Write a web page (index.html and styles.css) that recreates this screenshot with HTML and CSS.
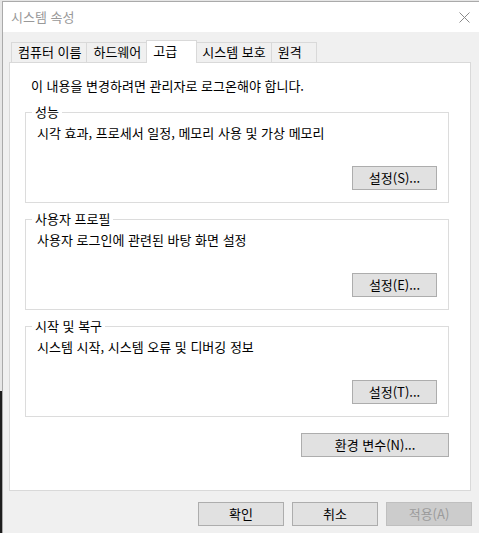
FILE: index.html
```html
<!DOCTYPE html>
<html lang="ko">
<head>
<meta charset="utf-8">
<title>시스템 속성</title>
<link rel="stylesheet" href="styles.css">
</head>
<body>
<div class="window">
  <div class="titlebar">
    <span class="title">시스템 속성</span>
    <svg class="close" viewBox="0 0 11 11" aria-hidden="true"><path d="M0.5 0.5 L10.5 10.5 M10.5 0.5 L0.5 10.5"/></svg>
  </div>
  <div class="body">
    <div class="tabs">
      <div class="tab">컴퓨터 이름</div>
      <div class="tab">하드웨어</div>
      <div class="tab active">고급</div>
      <div class="tab">시스템 보호</div>
      <div class="tab last">원격</div>
    </div>
    <div class="panel">
      <p class="notice">이 내용을 변경하려면 관리자로 로그온해야 합니다.</p>
      <div class="group">
        <span class="group-title">성능</span>
        <p class="group-desc">시각 효과, 프로세서 일정, 메모리 사용 및 가상 메모리</p>
        <button class="btn btn-set">설정(S)...</button>
      </div>
      <div class="group">
        <span class="group-title">사용자 프로필</span>
        <p class="group-desc">사용자 로그인에 관련된 바탕 화면 설정</p>
        <button class="btn btn-set">설정(E)...</button>
      </div>
      <div class="group">
        <span class="group-title">시작 및 복구</span>
        <p class="group-desc">시스템 시작, 시스템 오류 및 디버깅 정보</p>
        <button class="btn btn-set">설정(T)...</button>
      </div>
      <div class="env-row">
        <button class="btn btn-wide">환경 변수(N)...</button>
      </div>
    </div>
    <div class="footer">
      <button class="btn btn-dialog">확인</button>
      <button class="btn btn-dialog">취소</button>
      <button class="btn btn-dialog" disabled>적용(A)</button>
    </div>
  </div>
</div>
</body>
</html>
```
FILE: styles.css
```css
* { box-sizing: border-box; }
html, body { margin: 0; height: 100%; }
body {
  background: linear-gradient(to bottom, #e6e6e6 0, #e6e6e6 391px, #1e1e1e 391px);
  font-family: "Noto Sans CJK KR", "Noto Sans", sans-serif;
  font-size: 13px;
  line-height: 16px;
  color: #000;
  overflow: hidden;
}
.window {
  margin: 1px 0 0 2px;
  height: calc(100% - 1px);
  border-top: 1px solid #aaaaaa;
  border-left: 1px solid #aaaaaa;
  background: #f0f0f0;
}
.titlebar {
  height: 30px;
  background: #fff;
  display: flex;
  align-items: center;
  justify-content: space-between;
  padding: 0 9px 0 8px;
}
.title { color: #999999; }
.close { width: 11px; height: 11px; stroke: #8a8a8a; stroke-width: 1; fill: none; }
.body { padding: 8px 0 0 6px; }
.tabs {
  display: flex;
  align-items: flex-end;
  height: 22px;
  margin-left: 2px;
}
.tab {
  height: 20px;
  min-width: 46px;
  padding: 0 5px 0 6px;
  border: 1px solid #d9d9d9;
  border-right: none;
  border-bottom: none;
  background: #f0f0f0;
  line-height: 18px;
  white-space: nowrap;
}
.tab.last { border-right: 1px solid #d9d9d9; }
.tab.active {
  position: relative;
  z-index: 1;
  height: 23px;
  min-width: 51px;
  margin-bottom: -1px;
  background: #fff;
  border-right: 1px solid #d9d9d9;
  line-height: 20px;
}
.tab.active + .tab { border-left: none; padding-left: 5px; }
.panel {
  width: 462px;
  background: #fff;
  border: 1px solid #d9d9d9;
  padding: 15px 21px 33px 15px;
}
.notice { margin: 0 0 18px 6px; }
.group {
  position: relative;
  display: flex;
  flex-direction: column;
  border: 1px solid #dcdcdc;
  padding: 12px 11px 12px 11px;
}
.group + .group { margin-top: 16px; }
.group-title {
  position: absolute;
  top: -9px;
  left: 6px;
  padding: 0 3px;
  background: #fff;
}
.group-desc { margin: 0 0 25px; }
.btn {
  font: inherit;
  height: 24px;
  padding: 0;
  border: 1px solid #adadad;
  background: #e1e1e1;
  color: #000;
}
.btn-set { align-self: flex-end; width: 85px; }
.env-row { display: flex; justify-content: flex-end; margin-top: 16px; }
.btn-wide { width: 148px; }
.footer {
  display: flex;
  justify-content: flex-end;
  gap: 8px;
  margin-top: 11px;
  padding-right: 7px;
}
.btn-dialog { width: 86px; }
.btn:disabled { background: #cccccc; border-color: #bfbfbf; color: #9b9b9b; }
```
